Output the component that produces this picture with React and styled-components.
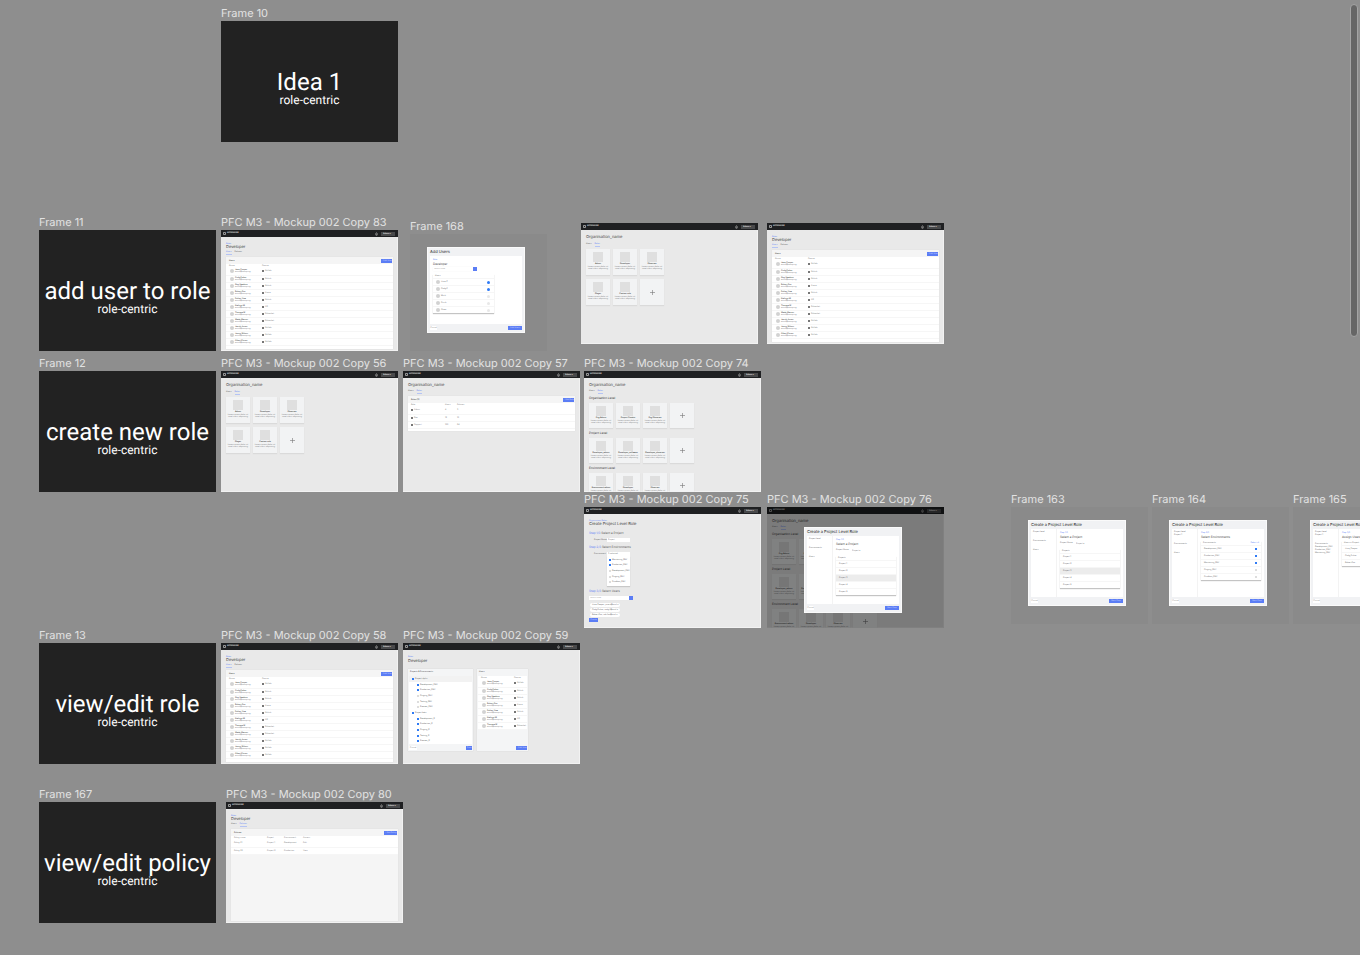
import React from "react";
import styled, { createGlobalStyle, css } from "styled-components";

const Global = createGlobalStyle`
  *, *::before, *::after { box-sizing: border-box; }
  body { margin: 0; background: #8e8e8e; font-family: Inter, "Liberation Sans", sans-serif; text-rendering: geometricPrecision; }
  button, input, select { font: inherit; margin: 0; padding: 0; border: 0; border-radius: 0; appearance: none; text-rendering: inherit; }
  p, h1, h2, h3, ul, figure { margin: 0; padding: 0; font-weight: 400; }
`;

const blue = "#5b7df5";

/* ---------- canvas ---------- */

const Canvas = styled.main`
  position: relative;
  min-height: 100vh;
  overflow: hidden;
  background: #8e8e8e;
`;

const Frame = styled.figure`
  position: absolute;
  left: ${(p) => p.$x}px;
  top: ${(p) => p.$y}px;
`;

const FrameLabel = styled.figcaption`
  height: 15px;
  font-size: 11px;
  line-height: 15px;
  white-space: nowrap;
  color: #e2e2e2;
`;

const ScrollThumb = styled.div`
  position: absolute;
  top: 4px;
  right: 2px;
  width: 8px;
  height: 333px;
  border: 1px solid #a4a4a4;
  border-radius: 4px;
  background: #666;
`;

const TitleCard = styled.section`
  display: flex;
  flex-direction: column;
  align-items: center;
  justify-content: center;
  width: 177px;
  height: 121px;
  padding-top: 14px;
  background: #222;
  color: #fff;
  font-family: Roboto, sans-serif;
  white-space: nowrap;
`;

const CardTitle = styled.h2`
  font-size: 24px;
  line-height: 24px;
`;

const CardSubtitle = styled.p`
  font-size: 12px;
  line-height: 13px;
`;

/* ---------- mockup shell ---------- */

const Screen = styled.section`
  position: relative;
  display: flex;
  flex-direction: column;
  width: 177px;
  height: 121px;
  overflow: hidden;
  background: #e9e9e9;
  color: #555;
  white-space: nowrap;
`;

const TopBar = styled.header`
  display: flex;
  align-items: center;
  flex: none;
  gap: 1px;
  height: 7px;
  padding: 0 3px 0 2px;
  background: #1f2022;
  color: #ddd;
  font-size: 2px;
  line-height: 3px;
  font-weight: 700;
`;

const Brand = styled.span`
  font-size: 2px;
`;

const Spacer = styled.span`
  flex: 1;
`;

const AccountSelect = styled.select`
  width: 14px;
  height: 4px;
  padding-left: 2px;
  margin-left: 2px;
  background: #48494b;
  color: #ddd;
  font-size: 2px;
  line-height: 4px;
`;

const Content = styled.div`
  display: flex;
  flex-direction: column;
  flex: 1;
  min-height: 0;
  padding: ${(p) => (p.$crumb ? "6px" : "4px")} 5px 2px 5px;
  box-shadow: inset -1px -1px 0 #f2f2f2;
`;

const Heading = styled.h1`
  flex: none;
  height: ${(p) => (p.$tight ? 4 : 6)}px;
  font-size: 4px;
  line-height: ${(p) => (p.$tight ? 4 : 6)}px;
  color: #444;
`;

const Crumb = styled.a`
  flex: none;
  height: 2px;
  font-size: 2px;
  line-height: 2px;
  color: ${blue};
  text-decoration: none;
`;

const Tabs = styled.nav`
  display: flex;
  flex: none;
  gap: 3px;
  height: ${(p) => p.$h || 9}px;
  align-items: center;
  font-size: 2px;
  line-height: 3px;
`;

const Tab = styled.a`
  color: #555;
  text-decoration: none;
  border-bottom: 1px solid transparent;
  ${(p) => p.$on && css`color: ${blue}; border-color: #b5c4f4;`}
`;

const SmallButton = styled.button`
  flex: none;
  width: ${(p) => p.$w || 11}px;
  height: 4px;
  font-size: 2px;
  line-height: 4px;
  background: ${(p) => (p.$plain ? "#fff" : blue)};
  color: ${(p) => (p.$plain ? "#888" : "#ccd7ff")};
`;

function Logo() {
  return (
    <svg width="3" height="3" viewBox="0 0 3 3" aria-hidden="true">
      <rect x="0.4" y="0.4" width="2.2" height="2.2" rx="0.5" fill="none" stroke="#ddd" strokeWidth="0.7" />
    </svg>
  );
}

function Bell() {
  return (
    <svg width="3" height="4" viewBox="0 0 3 4" aria-hidden="true">
      <path d="M0.4 2.8h2.2M0.8 2.6V1.5a0.7 0.7 0 0 1 1.4 0v1.1M1.2 3.5h0.6" fill="none" stroke="#bbb" strokeWidth="0.6" />
    </svg>
  );
}

function Mock({ children, crumb, overlay }) {
  return (
    <Screen>
      <TopBar>
        <Logo />
        <Brand>APPENGINE</Brand>
        <Spacer />
        <Bell />
        <AccountSelect aria-label="Account">
          <option>Admin ▾</option>
        </AccountSelect>
      </TopBar>
      <Content $crumb={crumb}>{children}</Content>
      {overlay}
    </Screen>
  );
}

/* ---------- role cards ---------- */

const Cards = styled.div`
  display: grid;
  flex: none;
  grid-template-columns: repeat(${(p) => p.$cols}, 24px);
  grid-auto-rows: ${(p) => p.$h}px;
  gap: 4px 3px;
`;

const RoleCard = styled.article`
  display: flex;
  flex-direction: column;
  align-items: center;
  padding-top: 3px;
  background: #f2f3f4;
  box-shadow: 0 1px 1px #dadada;
  font-size: 2px;
  line-height: 2px;
  color: #777;
`;

const Thumb = styled.div`
  flex: none;
  width: 10px;
  height: 10px;
  margin-bottom: 1px;
  background: #dfdfdf;
`;

const RoleName = styled.h3`
  font-size: 2px;
  line-height: 3px;
  font-weight: 600;
  color: #333;
`;

const AddCard = styled.button`
  display: flex;
  align-items: center;
  justify-content: center;
  background: #f2f3f4;
  box-shadow: 0 1px 1px #dadada;
`;

const SectionLabel = styled.h2`
  flex: none;
  height: 4px;
  margin-bottom: 3px;
  font-size: 3px;
  line-height: 4px;
  color: #333;
`;

const Section = styled.section`
  flex: none;
  margin-bottom: 3px;
`;

function Role({ name }) {
  return (
    <RoleCard>
      <Thumb />
      <RoleName>{name}</RoleName>
      <p>Lorem ipsum dolor sit</p>
      <p>amet cons adipiscing</p>
    </RoleCard>
  );
}

function Add() {
  return (
    <AddCard aria-label="Add role">
      <svg width="5" height="5" viewBox="0 0 5 5" aria-hidden="true">
        <path d="M2.5 0v5M0 2.5h5" stroke="#777" strokeWidth="0.6" />
      </svg>
    </AddCard>
  );
}

function RolesTabs({ h }) {
  return (
    <Tabs $h={h}>
      <Tab href="#users">Users</Tab>
      <Tab href="#roles" $on>Roles</Tab>
    </Tabs>
  );
}

function RoleGrid() {
  return (
    <Mock>
      <Heading>Organisation_name</Heading>
      <RolesTabs />
      <Cards $cols={3} $h={26}>
        {["Admin", "Developer", "Observer", "Player", "Custom role"].map((n) => <Role key={n} name={n} />)}
        <Add />
      </Cards>
    </Mock>
  );
}

const levels = [
  ["Organisation Level", ["Org Admin", "Project Creator", "Org Observer"]],
  ["Project Level", ["Developer_admin", "Developer_software", "Developer_observer"]],
  ["Environment Level", ["Environment admin", "Developer", "Observer"]],
];

function RoleLevels({ overlay }) {
  return (
    <Mock overlay={overlay}>
      <Heading>Organisation_name</Heading>
      <RolesTabs h={8} />
      {levels.map(([label, roles]) => (
        <Section key={label}>
          <SectionLabel>{label}</SectionLabel>
          <Cards $cols={4} $h={25}>
            {roles.map((n) => <Role key={n} name={n} />)}
            <Add />
          </Cards>
        </Section>
      ))}
    </Mock>
  );
}

/* ---------- tables ---------- */

const Panel = styled.section`
  display: flex;
  flex-direction: column;
  flex: ${(p) => (p.$fill ? 1 : "none")};
  min-height: 0;
  background: ${(p) => p.$bg || "#fff"};
  box-shadow: 0 0 1px #dadada;
`;

const PanelBar = styled.header`
  display: flex;
  flex: none;
  align-items: center;
  justify-content: space-between;
  height: 7px;
  padding: 0 1px 0 3px;
  background: #f5f5f5;
  font-size: 2px;
`;

const Table = styled.table`
  width: 100%;
  background: #fff;
  border-collapse: collapse;
  table-layout: fixed;
  font-size: 2px;
  line-height: 2px;
  text-align: left;
  color: #777;

  th, td { padding: 0; font-weight: 400; height: 7px; }
  thead th { height: 4px; }
  tbody td { border-bottom: 1px solid #f6f6f6; }
  th:first-child, td:first-child { padding-left: 3px; }
`;

const Person = styled.div`
  display: flex;
  align-items: center;
  gap: 1px;
  padding-left: 1px;
`;

const Avatar = styled.span`
  flex: none;
  width: 4px;
  height: 4px;
  border-radius: 50%;
  background: #d2d2d2;
`;

const Strong = styled.b`
  display: block;
  font-weight: 500;
  color: #333;
`;

const Tag = styled.span`
  display: flex;
  align-items: center;
  gap: 1px;

  &::before { content: ""; width: 2px; height: 2px; background: #777; }
`;

const people = [
  ["Jane Cooper", "GitHub"], ["Cody Fisher", "GitLab"], ["Guy Hawkins", "GitLab"], ["Robert Fox", "Azure"],
  ["Esther How", "GitLab"], ["Kathryn M", "AD"], ["Theresa W", "Bitbucket"], ["Wade Warren", "Bitbucket"],
  ["Jacob Jones", "GitHub"], ["Jenny Wilson", "GitHub"], ["Albert Flores", "GitHub"],
];

function UserTable({ rows }) {
  return (
    <Table>
      <colgroup><col width="36" /><col /></colgroup>
      <thead><tr><th>Name</th><th>Source</th></tr></thead>
      <tbody>
        {rows.map(([name, src]) => (
          <tr key={name}>
            <td>
              <Person>
                <Avatar />
                <span><Strong>{name}</Strong>email@company</span>
              </Person>
            </td>
            <td><Tag>{src}</Tag></td>
          </tr>
        ))}
      </tbody>
    </Table>
  );
}

function DeveloperHead({ policies }) {
  return (
    <>
      <Crumb href="#roles">Roles</Crumb>
      <Heading $tight={policies !== undefined}>Developer</Heading>
      {policies !== undefined && (
        <Tabs $h={8}>
          <Tab href="#users" $on={!policies}>Users</Tab>
          <Tab href="#policies" $on={policies}>Policies</Tab>
        </Tabs>
      )}
    </>
  );
}

function DeveloperUsers() {
  return (
    <Mock crumb>
      <DeveloperHead policies={false} />
      <Panel $fill>
        <PanelBar><Strong>Users</Strong><SmallButton>+ Add User</SmallButton></PanelBar>
        <UserTable rows={people} />
      </Panel>
    </Mock>
  );
}

function DataTable({ cols, head, rows }) {
  return (
    <Table>
      <colgroup>{cols.map((w, i) => <col key={i} width={w} />)}<col /></colgroup>
      <thead><tr>{head.map((h) => <th key={h}>{h}</th>)}</tr></thead>
      <tbody>
        {rows.map((r, n) => <tr key={n}>{r.map((c, i) => <td key={i}>{c}</td>)}</tr>)}
      </tbody>
    </Table>
  );
}

const Gap = styled.div`
  flex: none;
  height: 2px;
`;

function RoleList() {
  return (
    <Mock>
      <Heading>Organisation_name</Heading>
      <RolesTabs h={8} />
      <Panel>
        <PanelBar><Strong>Roles (3)</Strong><SmallButton>+ Add Role</SmallButton></PanelBar>
        <DataTable
          cols={[37, 12]}
          head={["Role", "Users", "Policies"]}
          rows={[[<Tag>Admin</Tag>, "4", "3"], [<Tag>Dev</Tag>, "12", "10"], [<Tag>Support</Tag>, "100", "24"]]}
        />
        <Gap />
      </Panel>
    </Mock>
  );
}

function Policies() {
  return (
    <Mock crumb>
      <DeveloperHead policies />
      <Panel $fill $bg="#f5f5f5">
        <PanelBar><Strong>Policies</Strong><SmallButton $w={13}>+ Add Policy</SmallButton></PanelBar>
        <DataTable
          cols={[36, 17, 19]}
          head={["Policy name", "Project", "Environment", "Access"]}
          rows={[["Policy 01", "Project 1", "Development", "Edit"], ["Policy 02", "Project 2", "Production", "View"]]}
        />
      </Panel>
    </Mock>
  );
}

/* ---------- view / edit split ---------- */

const Split = styled.div`
  display: flex;
  gap: 4px;
  height: 82px;
  margin-top: 5px;
`;

const SidePanel = styled.section`
  display: flex;
  flex-direction: column;
  width: ${(p) => p.$w}px;
  padding: 0 1px 1px;
  background: #f4f5f6;
  box-shadow: 0 0 1px #cfcfcf;
`;

const SideTitle = styled.h2`
  flex: none;
  height: 7px;
  padding-left: 1px;
  font-size: 2px;
  line-height: 7px;
  color: #333;
`;

const Tree = styled.div`
  display: flex;
  flex-direction: column;
  flex: 1;
  background: #fff;
`;

const CheckRow = styled.label`
  display: flex;
  flex: 1;
  align-items: center;
  gap: 1px;
  min-height: 0;
  padding-left: ${(p) => (p.$root ? 3 : 8)}px;
  background: ${(p) => (p.$shade ? "#f2f2f2" : "transparent")};
  font-size: 2px;
  line-height: 2px;
  color: #555;
`;

const Check = styled.input`
  flex: none;
  width: 2px;
  height: 2px;
  background: #ddd;

  &:checked { background: #2f7bf6; }
`;

const SideFooter = styled.footer`
  display: flex;
  flex: none;
  align-items: flex-end;
  justify-content: ${(p) => (p.$end ? "flex-end" : "space-between")};
  height: ${(p) => (p.$end ? "auto" : "6px")};
  margin-top: auto;
`;

const tree = [
  ["Project alpha", 1, 1], ["Development_ENV", 1], ["Production_ENV", 1], ["Staging_ENV", 0], ["Testing_ENV", 0], ["Preview_ENV", 0],
  ["Project beta", 1, 1], ["Development_B", 1], ["Production_B", 1], ["Staging_B", 1], ["Testing_B", 1], ["Preview_B", 1],
];

function EditRole() {
  return (
    <Mock crumb>
      <DeveloperHead />
      <Split>
        <SidePanel $w={65}>
          <SideTitle>Projects & Environments</SideTitle>
          <Tree>
            {tree.map(([name, on, root], i) => (
              <CheckRow key={name} $root={root} $shade={i === 0}>
                <Check type="checkbox" defaultChecked={!!on} />
                {name}
              </CheckRow>
            ))}
          </Tree>
          <SideFooter>
            <SmallButton $plain $w={8}>Cancel</SmallButton>
            <SmallButton $w={6}>Save</SmallButton>
          </SideFooter>
        </SidePanel>
        <SidePanel $w={51}>
          <SideTitle>Users</SideTitle>
          <UserTable rows={people.slice(0, 7)} />
          <SideFooter $end><SmallButton>+ Add User</SmallButton></SideFooter>
        </SidePanel>
      </Split>
    </Mock>
  );
}

/* ---------- create role form ---------- */

const Form = styled.form`
  display: flex;
  flex-direction: column;
  align-items: flex-start;
  font-size: 2px;
  line-height: 4px;
  padding-top: 5px;
`;

const StepTitle = styled.h2`
  height: 4px;
  font-size: 3px;
  line-height: 4px;
  color: #555;
`;

const Blue = styled.span`
  color: ${blue};
`;

const FieldRow = styled.label`
  display: flex;
  align-items: center;
  gap: 3px;
  height: 5px;
  margin: 2px 0 ${(p) => p.$after || 0}px ${(p) => (p.$flush ? 0 : 5)}px;
`;

const FieldName = styled.span`
  width: ${(p) => p.$w || 10}px;
`;

const Select = styled.select`
  width: ${(p) => p.$w || 23}px;
  height: 4px;
  padding-left: 1px;
  background: #fff;
  color: #777;
  font-size: 2px;
  line-height: 4px;
`;

const Options = styled.div`
  display: flex;
  flex-direction: column;
  width: 23px;
  height: 30px;
  margin: 0 0 3px 18px;
  padding: 1px 0;
  background: #fff;
  box-shadow: 0 1px 1px #c8c8c8;

  ${CheckRow} { padding-left: 2px; }
`;

const SearchRow = styled.div`
  display: flex;
  width: 44px;
  height: 4px;
  margin: ${(p) => (p.$tight ? "1px 0" : "3px 0")};
`;

const Search = styled.input`
  flex: 1;
  min-width: 0;
  padding-left: 1px;
  background: #fff;
  font-size: 2px;
  box-shadow: 0 0 1px #e0e0e0;
  &::placeholder { color: #999; }
`;

const Chip = styled.span`
  min-width: 30px;
  height: 4px;
  margin: 0 0 1px 1px;
  padding: 0 1px 0 2px;
  border-radius: 2px;
  background: #fff;
  color: #555;
`;

function CreateRole() {
  return (
    <Mock crumb>
      <Crumb href="#org">Organisation Roles</Crumb>
      <Heading $tight>Create Project Level Role</Heading>
      <Form>
        <StepTitle><Blue>Step 1/3</Blue> Select a Project</StepTitle>
        <FieldRow $after={3}><FieldName>Project Name</FieldName><Select><option>Project</option></Select></FieldRow>
        <StepTitle><Blue>Step 2/3</Blue> Select Environments</StepTitle>
        <FieldRow><FieldName>Environment</FieldName><Select><option>3 selected</option></Select></FieldRow>
        <Options>
          {["Monitoring_ENV", "Production_ENV", "Development_ENV", "Staging_ENV", "Sandbox_ENV"].map((n, i) => (
            <CheckRow key={n}><Check type="checkbox" defaultChecked={i < 2} />{n}</CheckRow>
          ))}
        </Options>
        <StepTitle><Blue>Step 3/3</Blue> Select Users</StepTitle>
        <SearchRow>
          <Search aria-label="Search users" placeholder="Search user" />
          <SmallButton type="button" $w={4} aria-label="Search" />
        </SearchRow>
        <Chip>Jane Cooper, jane.c@mail ×</Chip>
        <Chip>Cody Fisher, cody.f@mail ×</Chip>
        <Chip>Robert Fox, rob.fox@mail ×</Chip>
        <SmallButton type="button" $w={9}>Create</SmallButton>
      </Form>
    </Mock>
  );
}

/* ---------- dialogs ---------- */

const DialogBoard = styled.section`
  width: 137px;
  height: 117px;
  padding: 13px 17px;
  background: #8a8a8a;
`;

const Shade = styled.div`
  position: absolute;
  inset: 0;
  padding: 20px 37px;
  background: rgba(0, 0, 0, 0.47);
`;

const Dialog = styled.section`
  display: flex;
  flex-direction: column;
  width: 98px;
  height: 86px;
  padding: 0 2px;
  background: #f1f2f4;
  border: 1px solid #fafafa;
  color: #666;
  font-size: 2px;
  line-height: 3px;
  white-space: nowrap;
`;

const DialogTitle = styled.h2`
  flex: none;
  height: 8px;
  font-size: 4px;
  line-height: 8px;
  color: #222;
`;

const DialogBody = styled.div`
  display: flex;
  flex: 1;
  min-height: 0;
  background: #fff;
`;

const DialogNav = styled.nav`
  display: flex;
  flex-direction: column;
  gap: 6px;
  width: 26px;
  padding: 2px;
  border-right: 1px solid #f3f3f3;
`;

const DialogMain = styled.div`
  display: flex;
  flex-direction: column;
  flex: 1;
  padding: 3px 3px 0;
`;

const DialogStep = styled.h3`
  height: 4px;
  font-size: 3px;
  line-height: 4px;
  color: #444;
`;

const DialogFooter = styled.footer`
  display: flex;
  flex: none;
  align-items: center;
  justify-content: space-between;
  height: 8px;
`;

const List = styled.ul`
  flex: none;
  width: ${(p) => (p.$w ? p.$w + "px" : "100%")};
  margin-top: 2px;
  list-style: none;
  background: #fff;
  box-shadow: 0 1px 1px #c4c4c4;
`;

const ListHead = styled.li`
  display: flex;
  justify-content: space-between;
  height: 4px;
  padding: 0 2px;
  line-height: 4px;
`;

const ListItem = styled.li`
  height: 7px;
  border-top: 1px solid #f6f6f6;
  background: ${(p) => (p.$on ? "#ececec" : "#fff")};
`;

const ItemLabel = styled.label`
  display: flex;
  align-items: center;
  gap: 1px;
  height: 6px;
  padding: 0 4px 0 3px;
`;

const Dot = styled(Check)`
  width: 3px;
  height: 3px;
  border-radius: 50%;
  background: #e8e8e8;
`;

function CreateDialog({ step }) {
  const nav = [
    ["Project level", ...(step > 1 ? ["Project 1"] : [])],
    ["Environments", ...(step > 2 ? ["Development_ENV", "Production_ENV", "Monitoring_ENV"] : [])],
    ...(step < 3 ? [["Users"]] : []),
  ];
  return (
    <Dialog>
      <DialogTitle>Create a Project Level Role</DialogTitle>
      <DialogBody>
        <DialogNav>
          {nav.map((g) => <div key={g[0]}>{g.map((t) => <p key={t}>{t}</p>)}</div>)}
        </DialogNav>
        <DialogMain>
          <Blue>Step {step}/3</Blue>
          <DialogStep>{["Select a Project", "Select Environments", "Assign Users to Role"][step - 1]}</DialogStep>
          {step === 1 && (
            <>
              <FieldRow $flush $after={1}>
                <FieldName $w={12}>Project Name</FieldName>
                <Select $w={21}><option>Project ▾</option></Select>
              </FieldRow>
              <List>
                <ListHead>Projects</ListHead>
                {["Project 1", "Project 2", "Project 3", "Project 4", "Project 5"].map((n, i) => (
                  <ListItem key={n} $on={i === 2}><ItemLabel as="span">{n}</ItemLabel></ListItem>
                ))}
              </List>
            </>
          )}
          {step === 2 && (
            <List>
              <ListHead>Environments<Blue>Select all</Blue></ListHead>
              {["Development_ENV", "Production_ENV", "Monitoring_ENV", "Staging_ENV", "Sandbox_ENV"].map((n, i) => (
                <ListItem key={n}>
                  <ItemLabel>{n}<Spacer /><Check type="checkbox" defaultChecked={i < 3} /></ItemLabel>
                </ListItem>
              ))}
            </List>
          )}
          {step === 3 && (
            <List>
              <ListHead>Users in Project</ListHead>
              {["Jane_Cooper", "Cody_Fisher", "Robert Fox"].map((n) => (
                <ListItem key={n}><ItemLabel as="span">{n}</ItemLabel></ListItem>
              ))}
            </List>
          )}
        </DialogMain>
      </DialogBody>
      <DialogFooter>
        <SmallButton $plain $w={7}>Cancel</SmallButton>
        <SmallButton $w={14}>Next Step</SmallButton>
      </DialogFooter>
    </Dialog>
  );
}

function AddUsersDialog() {
  return (
    <Dialog>
      <DialogTitle>Add Users</DialogTitle>
      <DialogBody>
        <DialogMain>
          <Blue>Role</Blue>
          <DialogStep>Developer</DialogStep>
          <SearchRow $tight>
            <Search aria-label="Search users" placeholder="Search user" />
            <SmallButton $w={4} aria-label="Search" />
          </SearchRow>
          <List $w={61}>
            <ListHead>Users</ListHead>
            {["Jane C", "Cody F", "Mark", "Sarah", "Oliver"].map((n, i) => (
              <ListItem key={n}>
                <ItemLabel><Avatar />{n}<Spacer /><Dot type="checkbox" defaultChecked={i < 2} /></ItemLabel>
              </ListItem>
            ))}
          </List>
        </DialogMain>
      </DialogBody>
      <DialogFooter>
        <SmallButton $plain $w={7}>Cancel</SmallButton>
        <SmallButton $w={14}>Add Users</SmallButton>
      </DialogFooter>
    </Dialog>
  );
}

function Title({ children }) {
  return (
    <TitleCard>
      <CardTitle>{children}</CardTitle>
      <CardSubtitle>role-centric</CardSubtitle>
    </TitleCard>
  );
}

const frames = [
  [221, 6, "Frame 10", <Title>Idea 1</Title>],
  [39, 215, "Frame 11", <Title>add user to role</Title>],
  [221, 215, "PFC M3 - Mockup 002 Copy 83", <DeveloperUsers />],
  [410, 219, "Frame 168", <DialogBoard><AddUsersDialog /></DialogBoard>],
  [581, 223, null, <RoleGrid />],
  [767, 223, null, <DeveloperUsers />],
  [39, 356, "Frame 12", <Title>create new role</Title>],
  [221, 356, "PFC M3 - Mockup 002 Copy 56", <RoleGrid />],
  [403, 356, "PFC M3 - Mockup 002 Copy 57", <RoleList />],
  [584, 356, "PFC M3 - Mockup 002 Copy 74", <RoleLevels />],
  [584, 492, "PFC M3 - Mockup 002 Copy 75", <CreateRole />],
  [767, 492, "PFC M3 - Mockup 002 Copy 76", <RoleLevels overlay={<Shade><CreateDialog step={1} /></Shade>} />],
  [1011, 492, "Frame 163", <DialogBoard><CreateDialog step={1} /></DialogBoard>],
  [1152, 492, "Frame 164", <DialogBoard><CreateDialog step={2} /></DialogBoard>],
  [1293, 492, "Frame 165", <DialogBoard><CreateDialog step={3} /></DialogBoard>],
  [39, 628, "Frame 13", <Title>view/edit role</Title>],
  [221, 628, "PFC M3 - Mockup 002 Copy 58", <DeveloperUsers />],
  [403, 628, "PFC M3 - Mockup 002 Copy 59", <EditRole />],
  [39, 787, "Frame 167", <Title>view/edit policy</Title>],
  [226, 787, "PFC M3 - Mockup 002 Copy 80", <Policies />],
];

export default function App() {
  return (
    <>
      <Global />
      <Canvas>
        {frames.map(([x, y, label, body]) => (
          <Frame key={`${x}-${y}`} $x={x} $y={y}>
            {label && <FrameLabel>{label}</FrameLabel>}
            {body}
          </Frame>
        ))}
        <ScrollThumb />
      </Canvas>
    </>
  );
}
